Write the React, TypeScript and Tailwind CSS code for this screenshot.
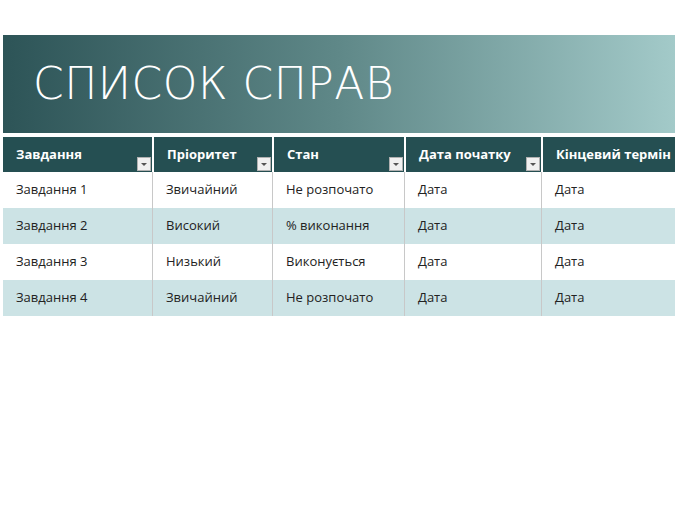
export default function App() {
  const cols = [
    { t: "Завдання", w: "w-[149px]", dd: true },
    { t: "Пріоритет", w: "w-[120px]", dd: true },
    { t: "Стан", w: "w-[132px]", dd: true },
    { t: "Дата початку", w: "w-[137px]", dd: true },
    { t: "Кінцевий термін", w: "flex-1", dd: false },
  ];
  const rows = [
    ["Завдання 1", "Звичайний", "Не розпочато", "Дата", "Дата"],
    ["Завдання 2", "Високий", "% виконання", "Дата", "Дата"],
    ["Завдання 3", "Низький", "Виконується", "Дата", "Дата"],
    ["Завдання 4", "Звичайний", "Не розпочато", "Дата", "Дата"],
  ];
  return (
    <div className="w-[675px] h-[520px] bg-white pt-[35px] pl-[3px]" style={{ fontFamily: '"Open Sans", "Noto Sans", sans-serif' }}>
      <div className="h-[98px] bg-gradient-to-r from-[#2d5457] via-[#5f8888] to-[#a3cac9] flex items-center pl-[30px]">
        <span className="text-white text-[44px] font-light tracking-[0.5px] leading-none" style={{ fontFamily: '"DejaVu Sans", sans-serif', fontWeight: 200 }}>СПИСОК СПРАВ</span>
      </div>
      <div className="mt-[4px] flex h-[35px] bg-[#254f52] text-white text-[13px] font-bold">
        {cols.map((c, i) => (
          <div key={i} className={`${c.w} relative flex items-center pl-[13px] ${i > 0 ? "border-l-2 border-white" : ""}`}>
            {c.t}
            {c.dd && (
              <div className="absolute right-[1px] bottom-[1px] w-[14px] h-[14px] bg-[#f0f0f0] border border-[#b0b0b0] flex items-center justify-center">
                <div className="w-0 h-0 border-l-[3px] border-r-[3px] border-t-[3px] border-l-transparent border-r-transparent border-t-[#555]" />
              </div>
            )}
          </div>
        ))}
      </div>
      {rows.map((r, ri) => (
        <div key={ri} className={`flex h-[36px] text-[13px] text-[#222] ${ri % 2 ? "bg-[#cce3e5]" : "bg-white"}`}>
          {r.map((v, i) => (
            <div key={i} className={`${cols[i].w} flex items-center pl-[13px] ${i > 0 ? "border-l border-[#c8c8c8]" : ""}`}>{v}</div>
          ))}
        </div>
      ))}
    </div>
  );
}
